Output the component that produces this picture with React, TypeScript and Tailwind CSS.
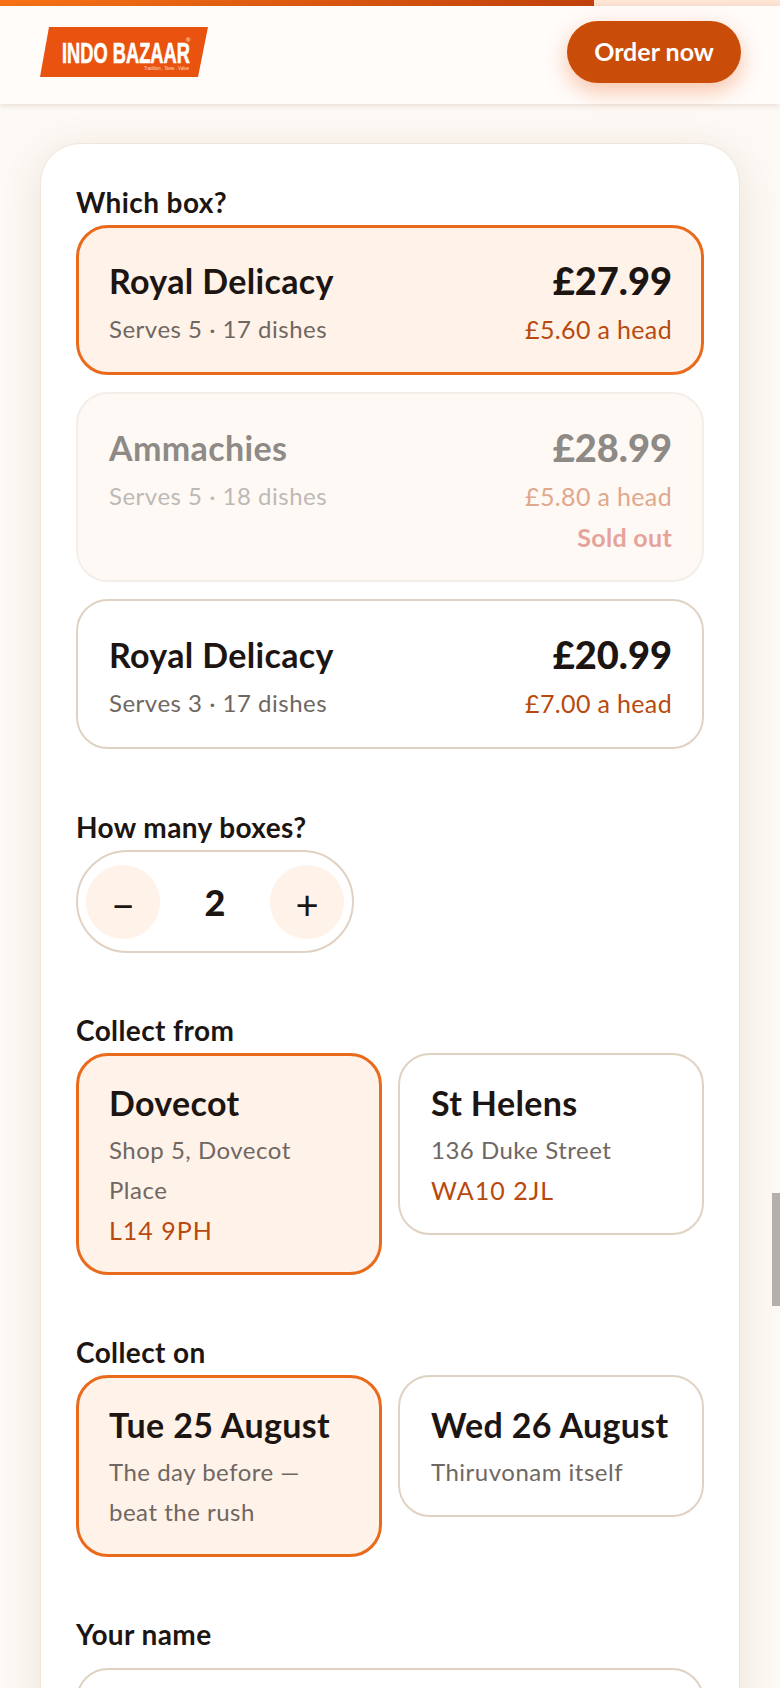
const font = { fontFamily: '"Lato", "Noto Sans", sans-serif' };

function Label({ children }: { children: string }) {
  return <p className="text-[28px] leading-[32px] font-bold tracking-[0.4px] text-[#1c1512] mb-[7px]">{children}</p>;
}

function Logo() {
  return (
    <svg width="168" height="50" viewBox="0 0 168 50" className="shrink-0">
      <polygon points="9,0 168,0 158,50 0,50" fill="#e9530f" />
      <text transform="translate(22 36) scale(0.61 1)" fill="#fff" stroke="#fff" strokeWidth="0.6" fontFamily="Liberation Sans" fontWeight="700" fontSize="30">INDO BAZAAR</text>
      <text x="104" y="43" fill="#ffd9c2" fontFamily="Liberation Sans" fontSize="4.5" textLength="45" lengthAdjust="spacing">Tradition . Taste . Value</text>
      <text x="146" y="15" fill="#fff" fontFamily="Liberation Sans" fontSize="6">®</text>
    </svg>
  );
}

function BoxOption({ name, price, serves, head, selected, soldOut }: { name: string; price: string; serves: string; head: string; selected?: boolean; soldOut?: boolean }) {
  const box = selected ? "border-[3px] border-[#ea6a1c] bg-[#fff2e9] pl-[30px] pr-[29px] pt-[30px]" : soldOut ? "border-2 border-[#f4eee8] bg-[#fff9f5] pl-[31px] pr-[30px] pt-[31px]" : "border-2 border-[#e0d2c3] bg-white pl-[31px] pr-[30px] pt-[31px]";
  return (
    <div className={`rounded-[32px] flex justify-between ${box} ${soldOut ? "h-[190px]" : "h-[150px]"}`}>
      <div>
        <p className={`text-[34px] leading-[44px] font-bold tracking-[0.35px] mt-[1px] ${soldOut ? "text-[#8e8a86]" : "text-[#1c1512]"}`}>{name}</p>
        <p className={`text-[24px] leading-[40px] tracking-[0.5px] mt-[6px] ${soldOut ? "text-[#bdb9b5]" : "text-[#6f6762]"}`}>{serves}</p>
      </div>
      <div className="text-right">
        <p className={`text-[38px] leading-[44px] font-black ${soldOut ? "text-[#8e8a86]" : "text-[#1c1512]"}`}>{price}</p>
        <p className={`text-[25px] leading-[40px] tracking-[0.35px] mt-[7px] ${soldOut ? "text-[#e0a88c]" : "text-[#b94a0e]"}`}>{head}</p>
        {soldOut && <p className="text-[25px] leading-[40px] tracking-[0.3px] font-bold text-[#e5a39c] mt-[1px]">Sold out</p>}
      </div>
    </div>
  );
}

function Choice({ title, lines, code, selected }: { title: string; lines: string[]; code?: string; selected?: boolean }) {
  return (
    <div className={`w-[306px] self-start rounded-[32px] ${selected ? "border-[3px] border-[#ea6a1c] bg-[#fff2e9] px-[30px] pt-[25px] pb-[22px]" : "border-2 border-[#e0d2c3] bg-white px-[31px] pt-[26px] pb-[23px]"}`}>
      <p className="text-[34px] leading-[44px] font-bold tracking-[0.35px] text-[#1c1512] mb-[5px] whitespace-nowrap">{title}</p>
      {lines.map((l) => (
        <p key={l} className="text-[24px] leading-[40px] tracking-[0.5px] text-[#6f6762]">{l}</p>
      ))}
      {code && <p className="text-[25px] leading-[40px] tracking-[1px] text-[#b94a0e]">{code}</p>}
    </div>
  );
}

export default function App() {
  return (
    <div style={font} className="relative h-[1688px] overflow-hidden bg-[#fdf9f5]">
      <div className="h-[6px] bg-[#ffe6d5]">
        <div className="h-full w-[594px] bg-gradient-to-r from-[#f97316] to-[#c2410c]" />
      </div>
      <header className="h-[98px] flex items-center justify-between pl-10 pr-[39px] pb-[6px] bg-[#fffcfa] shadow-[0_1px_6px_rgba(120,80,40,0.18)]">
        <Logo />
        <button className="w-[174px] h-[62px] rounded-[31px] bg-[#c94c08] text-white text-[25px] font-bold shadow-[0_8px_22px_rgba(234,88,12,0.35)]">Order now</button>
      </header>
      <main className="px-10 pt-[39px]">
        <div className="bg-white border border-[#efe6dc] rounded-[40px] px-[35px] pt-[42px] shadow-[0_8px_40px_rgba(120,80,30,0.13)]">
          <Label>Which box?</Label>
          <div className="flex flex-col gap-[17px]">
            <BoxOption name="Royal Delicacy" price="£27.99" serves="Serves 5 · 17 dishes" head="£5.60 a head" selected />
            <BoxOption name="Ammachies" price="£28.99" serves="Serves 5 · 18 dishes" head="£5.80 a head" soldOut />
            <BoxOption name="Royal Delicacy" price="£20.99" serves="Serves 3 · 17 dishes" head="£7.00 a head" />
          </div>

          <div className="mt-[62px]">
            <Label>How many boxes?</Label>
            <div className="w-[278px] h-[103px] rounded-full border-2 border-[#e0d2c3] flex items-center justify-between px-[8px]">
              <button className="w-[74px] h-[74px] rounded-full bg-[#fff2e9] text-[#1c1512] text-[40px] leading-[74px] pt-[3px]">−</button>
              <span className="text-[36px] font-black text-[#1c1512]">2</span>
              <button className="w-[74px] h-[74px] rounded-full bg-[#fff2e9] text-[#1c1512] text-[40px] leading-[74px] pt-[3px]">+</button>
            </div>
          </div>

          <div className="mt-[61px]">
            <Label>Collect from</Label>
            <div className="flex gap-4">
              <Choice title="Dovecot" lines={["Shop 5, Dovecot", "Place"]} code="L14 9PH" selected />
              <Choice title="St Helens" lines={["136 Duke Street"]} code="WA10 2JL" />
            </div>
          </div>

          <div className="mt-[61px]">
            <Label>Collect on</Label>
            <div className="flex gap-4">
              <Choice title="Tue 25 August" lines={["The day before —", "beat the rush"]} selected />
              <Choice title="Wed 26 August" lines={["Thiruvonam itself"]} />
            </div>
          </div>

          <div className="mt-[61px]">
            <Label>Your name</Label>
            <div className="h-[90px] rounded-[32px] border-2 border-[#e0d2c3] mt-[18px]" />
          </div>
        </div>
      </main>
      <div className="absolute right-0 top-[1193px] w-2 h-[113px] bg-[#b5b0ab]" />
    </div>
  );
}
